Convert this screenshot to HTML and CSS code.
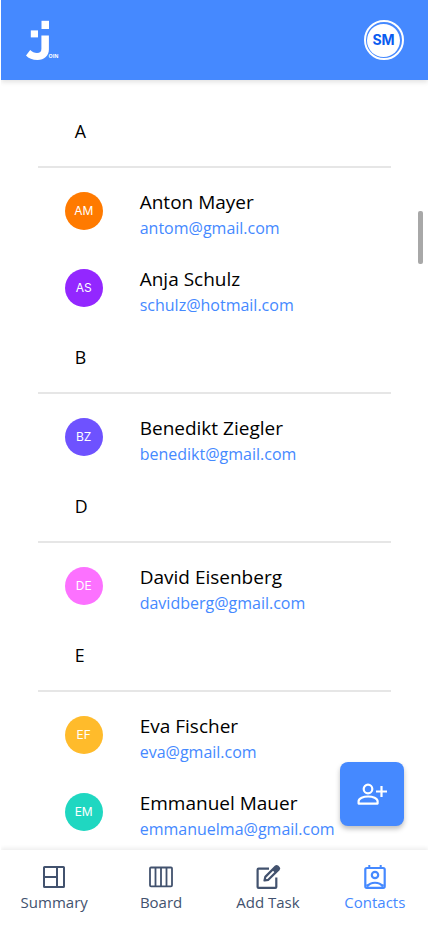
FILE: index.html
```html
<!DOCTYPE html>
<html lang="en">
<head>
<meta charset="utf-8">
<title>Join Contacts</title>
<link rel="stylesheet" href="styles.css">
</head>
<body>
<div class="app">
  <header class="topbar">
    <div class="logo">
      <svg class="logo-mark" width="24" height="41" viewBox="0 0 24 41" fill="#fff" aria-hidden="true">
        <rect x="15.500" y="0.800" width="7.500" height="8.200"/>
        <rect x="4.800" y="10.400" width="7.200" height="7"/>
        <path d="M15.400 15.500H22.900V29.500C22.900 35.800 18.300 39.900 11.500 39.900C6.500 39.900 2.500 38.300 0 35.400L4.200 30.100C6.200 32.100 8.400 33 11 33C14 33 15.400 31.600 15.400 28.700Z"/>
      </svg>
      <span class="logo-text">OIN</span>
    </div>
    <div class="profile"><span class="profile-inner">SM</span></div>
  </header>

  <main class="list">
    <section>
      <h2 class="letter">A</h2>
      <article class="contact"><span class="avatar orange">AM</span><div class="info"><div class="name">Anton Mayer</div><div class="mail">antom@gmail.com</div></div></article>
      <article class="contact"><span class="avatar purple">AS</span><div class="info"><div class="name">Anja Schulz</div><div class="mail">schulz@hotmail.com</div></div></article>
    </section>
    <section>
      <h2 class="letter">B</h2>
      <article class="contact"><span class="avatar indigo">BZ</span><div class="info"><div class="name">Benedikt Ziegler</div><div class="mail">benedikt@gmail.com</div></div></article>
    </section>
    <section>
      <h2 class="letter">D</h2>
      <article class="contact"><span class="avatar pink">DE</span><div class="info"><div class="name">David Eisenberg</div><div class="mail">davidberg@gmail.com</div></div></article>
    </section>
    <section>
      <h2 class="letter">E</h2>
      <article class="contact"><span class="avatar yellow">EF</span><div class="info"><div class="name">Eva Fischer</div><div class="mail">eva@gmail.com</div></div></article>
      <article class="contact"><span class="avatar teal">EM</span><div class="info"><div class="name">Emmanuel Mauer</div><div class="mail">emmanuelma@gmail.com</div></div></article>
    </section>
  </main>

  <nav class="tabs">
    <a class="tab">
      <svg width="24" height="24" viewBox="0 0 24 24" fill="none" stroke="currentColor" stroke-width="2" stroke-linejoin="round"><rect x="2" y="2" width="20" height="20" rx=".6"/><path d="M15 2V22M2 12H15"/></svg>
      <span>Summary</span>
    </a>
    <a class="tab">
      <svg width="26" height="24" viewBox="0 0 26 24" fill="none" stroke="currentColor" stroke-width="1.800"><rect x="2" y="2.500" width="22" height="18.800" rx="1"/><path d="M7.500 2.500V21.300M13 2.500V21.300M18.500 2.500V21.300"/></svg>
      <span>Board</span>
    </a>
    <a class="tab">
      <svg width="26" height="26" viewBox="0 0 26 26" fill="none" stroke="currentColor" stroke-width="2.200"><path d="M14 4.700H3.600Q2.600 4.700 2.600 5.700V22.900Q2.600 23.900 3.600 23.900H20.300Q21.300 23.900 21.300 22.900V13.500" stroke-linejoin="round"/><path d="M9.500 16.500L10.300 12.900L20.800 2.400Q21.600 1.700 22.400 2.400L23.800 3.800Q24.500 4.600 23.800 5.400L13.300 15.800Z" stroke-linejoin="round"/><path d="M18.600 5.100L21.200 7.700M20.400 3.600L22.900 6.100" stroke-width="3.200"/></svg>
      <span>Add Task</span>
    </a>
    <a class="tab active">
      <svg width="24" height="26" viewBox="0 0 24 26" fill="none" stroke="currentColor" stroke-width="2.200"><rect x="2.300" y="4" width="19.400" height="19.800" rx="1.500"/><path d="M6.300 1V4M17.700 1V4" stroke-width="2"/><circle cx="12" cy="11" r="3.200" stroke-width="2.200"/><path d="M4 22.500C8 17.500 16 17.500 20 22.500"/><path d="M3 20.500L6 20.200L4 23ZM21 20.500L18 20.200L20 23Z" fill="currentColor" stroke="none"/></svg>
      <span>Contacts</span>
    </a>
  </nav>

  <button class="add" aria-label="Add contact">
    <svg width="32" height="32" viewBox="0 0 32 32" fill="none" stroke="#fff" stroke-width="2.200"><circle cx="12" cy="11" r="4.300"/><path d="M2.600 25.600V23.200C2.600 20.200 7.500 18.500 12.100 18.500S21.600 20.200 21.600 23.200V25.600Z" stroke-linejoin="round"/><path d="M25.500 8V19M20 13.500H31"/></svg>
  </button>
  <div class="scroll-thumb"></div>
</div>
</body>
</html>
```
FILE: styles.css
```css
* { box-sizing: border-box; }

body {
  margin: 0;
  background: #fff;
  font-family: "Open Sans", sans-serif;
  color: #000;
}

.app {
  position: relative;
  display: flex;
  flex-direction: column;
  width: 427.500px;
  height: 926px;
  margin-left: .75px;
  overflow: hidden;
}

.topbar {
  display: flex;
  flex: 0 0 80px;
  align-items: center;
  justify-content: space-between;
  padding: 0 24.750px 0 25.250px;
  background: #4589ff;
  box-shadow: 0 2px 5px rgba(0, 0, 0, .12);
  z-index: 1;
}

.logo { display: flex; align-items: flex-end; }
.logo-mark { display: block; }
.logo-text {
  margin: 0 0 1px -1.500px;
  font-size: 5.200px;
  font-weight: 700;
  line-height: 7px;
  color: #fff;
}

.profile {
  display: grid;
  place-items: center;
  width: 40px;
  height: 40px;
  border: 2px solid #fff;
  border-radius: 50%;
}
.profile-inner {
  width: 33px;
  height: 33px;
  border-radius: 50%;
  background: #fff;
  color: #0a5cf0;
  font: 700 14px/32px Inter, sans-serif;
  text-align: center;
}

.list {
  flex: 1;
  min-height: 0;
  padding: 21px 37.250px 0;
  overflow: hidden;
}

.letter {
  height: 67px;
  margin: 0 0 4px;
  padding: 18px 36.700px 0;
  border-bottom: 2px solid #e6e6e6;
  font-size: 17.800px;
  font-weight: 400;
  line-height: 25px;
}
section { padding-bottom: 1px; }

.contact {
  display: flex;
  align-items: center;
  gap: 37px;
  height: 77px;
  padding-left: 26.700px;
}

.avatar {
  width: 38px;
  height: 38px;
  border-radius: 50%;
  color: #fff;
  font: 400 12px/38px Inter, sans-serif;
  text-align: center;
}
.orange { background: #ff7a00; }
.purple { background: #9327ff; }
.indigo { background: #6e52ff; }
.pink { background: #fc71ff; }
.yellow { background: #ffbb2b; }
.teal { background: #1fd7c1; }

.info { padding-top: 8px; }
.name { font-size: 19px; line-height: 26px; }
.mail { font-size: 16px; line-height: 26px; color: #4589ff; }

.tabs {
  display: grid;
  flex: 0 0 76px;
  grid-template-columns: repeat(4, 1fr);
  background: #fff;
  box-shadow: 0 -2px 4px rgba(0, 0, 0, .07);
  z-index: 1;
}
.tab {
  display: flex;
  flex-direction: column;
  align-items: center;
  justify-content: flex-start;
  padding-top: 14px;
  color: #42526e;
  font-size: 15px;
  line-height: 22px;
}
.tab svg { height: 26px; }
.tab span { margin-top: 1px; }
.active { color: #4589ff; }

.add {
  position: absolute;
  right: 24.500px;
  bottom: 100px;
  display: grid;
  place-items: center;
  width: 64px;
  height: 64px;
  padding: 0;
  border: 0;
  border-radius: 8px;
  background: #4589ff;
  box-shadow: 0 3px 5px rgba(0, 0, 0, .25);
  z-index: 2;
}

.scroll-thumb {
  position: absolute;
  top: 211px;
  right: 5.500px;
  width: 4.500px;
  height: 53px;
  border-radius: 2px;
  background: #a8a8a8;
}
```
